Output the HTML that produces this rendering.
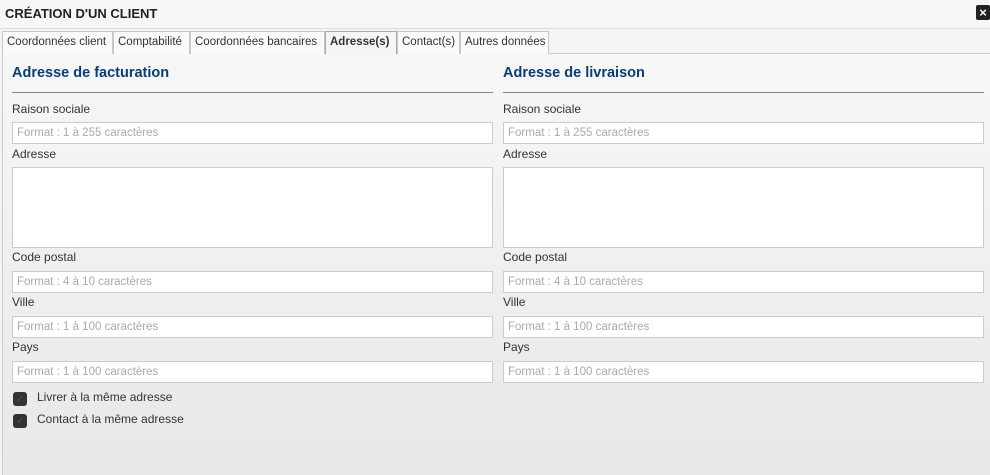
<!DOCTYPE html>
<html><head><meta charset="utf-8"><style>
*{box-sizing:border-box;margin:0;padding:0}
body{width:990px;height:475px;overflow:hidden;font-family:"Liberation Sans",sans-serif;background:#f4f4f4;color:#333;position:relative}
.hdr{position:absolute;left:0;top:0;width:990px;height:29px;background:#f6f6f6;border-bottom:1px solid #ddd}
.hdr h1{position:absolute;left:5px;top:6px;font-size:13px;font-weight:bold;color:#222}
.x{position:absolute;left:976px;top:5px;width:14px;height:15px;background:#222;border-radius:2px;color:#fff;font-size:13px;font-weight:bold;text-align:center;line-height:15px}
.tabs{position:absolute;left:2px;top:31px;height:23px}
.tab{position:absolute;top:0;height:23px;border:1px solid #c8c8c8;border-bottom:none;background:#fafafa;font-size:11.5px;line-height:21px;padding-left:4px;color:#333;white-space:nowrap}
.tab.on{background:#f5f5f5;font-weight:bold;border-color:#aaa}
.panel{position:absolute;left:2px;top:53px;width:988px;height:422px;border-left:1px solid #ccc;border-top:1px solid #ccc;background:linear-gradient(#f7f7f7,#e8e8e8)}
.col{position:absolute;top:0;width:481px}
.ttl{position:absolute;top:11px;left:0;font-size:14.5px;font-weight:bold;color:#0b3d73}
.line{position:absolute;top:38px;left:0;width:481px;height:1px;background:#888}
.lb{position:absolute;left:0;font-size:12px;color:#333}
.in{position:absolute;left:0;width:481px;height:22px;background:#fff;border:1px solid #ccc;font-size:11.5px;color:#aaa;padding-left:4px;line-height:20px}
.cb{position:absolute;left:1px;width:14px;height:14px;background:#333;border-radius:3px;color:#555;font-size:9px;text-align:center;line-height:14px}
.ct{position:absolute;left:25px;font-size:12px;color:#333}
</style></head><body>
<div class="hdr"><h1>CRÉATION D'UN CLIENT</h1><div class="x">×</div></div>
<div class="panel">
<div class="col" style="left:9px">
<div class="ttl">Adresse de facturation</div><div class="line"></div>
<div class="lb" style="top:48px">Raison sociale</div>
<div class="in" style="top:68px">Format : 1 à 255 caractères</div>
<div class="lb" style="top:93px">Adresse</div>
<div class="in" style="top:113px;height:81px"></div>
<div class="lb" style="top:196px">Code postal</div>
<div class="in" style="top:217px">Format : 4 à 10 caractères</div>
<div class="lb" style="top:241px">Ville</div>
<div class="in" style="top:262px">Format : 1 à 100 caractères</div>
<div class="lb" style="top:286px">Pays</div>
<div class="in" style="top:307px">Format : 1 à 100 caractères</div>
<div class="cb" style="top:338px">✓</div><div class="ct" style="top:336px">Livrer à la même adresse</div>
<div class="cb" style="top:360px">✓</div><div class="ct" style="top:358px">Contact à la même adresse</div>
</div>
<div class="col" style="left:500px">
<div class="ttl">Adresse de livraison</div><div class="line"></div>
<div class="lb" style="top:48px">Raison sociale</div>
<div class="in" style="top:68px">Format : 1 à 255 caractères</div>
<div class="lb" style="top:93px">Adresse</div>
<div class="in" style="top:113px;height:81px"></div>
<div class="lb" style="top:196px">Code postal</div>
<div class="in" style="top:217px">Format : 4 à 10 caractères</div>
<div class="lb" style="top:241px">Ville</div>
<div class="in" style="top:262px">Format : 1 à 100 caractères</div>
<div class="lb" style="top:286px">Pays</div>
<div class="in" style="top:307px">Format : 1 à 100 caractères</div>
</div>
</div>
<div class="tabs">
<div class="tab" style="left:0;width:111px">Coordonnées client</div>
<div class="tab" style="left:111px;width:77px">Comptabilité</div>
<div class="tab" style="left:188px;width:135px">Coordonnées bancaires</div>
<div class="tab on" style="left:323px;width:72px">Adresse(s)</div>
<div class="tab" style="left:395px;width:63px">Contact(s)</div>
<div class="tab" style="left:458px;width:89px">Autres données</div>
</div>
</body></html>
